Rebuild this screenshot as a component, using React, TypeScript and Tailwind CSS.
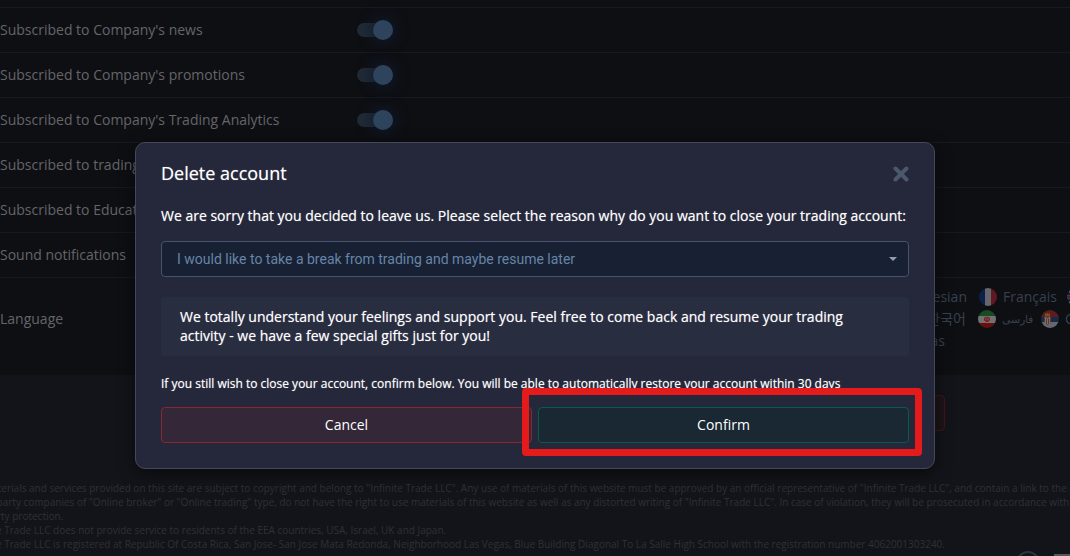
import React, { useId, useState } from 'react';
import clsx from 'clsx';

interface ToggleRowProps {
  label: string;
}

function ToggleRow({ label }: ToggleRowProps) {
  const [enabled, setEnabled] = useState(true);
  const id = useId();

  return (
    <div className="flex h-[45px] items-center border-b border-[#161822]">
      <label htmlFor={id} className="w-[357px] shrink-0 pb-0.5 text-[14px] text-[#646569]">
        {label}
      </label>
      <input
        id={id}
        type="checkbox"
        checked={enabled}
        onChange={(e) => setEnabled(e.target.checked)}
        className="relative h-3.5 w-9 appearance-none rounded-full bg-[#202b36] before:absolute before:-top-[3px] before:left-0 before:size-5 before:rounded-full before:bg-[#2e435c] before:shadow-[0_0_14px_2px_#101a2c] before:content-[''] checked:before:left-4"
      />
    </div>
  );
}

type FlagName = 'fr' | 'ir' | 'rs' | 'gb';

function Flag({ name }: { name: FlagName }) {
  return (
    <svg viewBox="0 0 18 18" className="size-[18px] shrink-0 rounded-full" aria-hidden="true">
      {name === 'fr' && (
        <>
          <path fill="#0d1f4b" d="M0 0h6v18H0z" />
          <path fill="#66676a" d="M6 0h6v18H6z" />
          <path fill="#631722" d="M12 0h6v18h-6z" />
        </>
      )}
      {name === 'ir' && (
        <>
          <path fill="#174b22" d="M0 0h18v6H0z" />
          <path fill="#707173" d="M0 6h18v7H0z" />
          <path fill="#68100f" d="M0 13h18v5H0z" />
          <path fill="none" stroke="#821512" strokeWidth="1.3" d="M7.8 7.2a2.3 2.3 0 1 0 2.4 0M9 6.8v4.6" />
        </>
      )}
      {name === 'rs' && (
        <>
          <path fill="#5d1c20" d="M0 0h18v7H0z" />
          <path fill="#152b48" d="M0 7h18v5H0z" />
          <path fill="#67686b" d="M0 12h18v6H0z" />
          <path fill="#65312b" d="M3 6h7v6l-3.500 3L3 12z" />
          <path fill="none" stroke="#777374" d="M4.500 14V7l2 2 2-2v7M6.500 9v5" />
          <path fill="#73551d" d="M4 3l1.500 1L6.500 2.500 7.500 4 9 3v3H4z" />
        </>
      )}
      {name === 'gb' && (
        <>
          <path fill="#0f1d4d" d="M0 0h18v18H0z" />
          <path stroke="#68696c" strokeWidth="3" d="M0 0l18 18M18 0L0 18M9 0v18M0 9h18" />
          <path stroke="#631722" strokeWidth="2" d="M9 0v18M0 9h18" />
        </>
      )}
    </svg>
  );
}

function LanguageList() {
  return (
    <div className="min-w-0 flex-1 whitespace-nowrap pl-[535px] text-[14px] leading-[22px] text-[#36414f]">
      <div className="flex items-center">
        <a href="#id" className="w-[75px] shrink-0 text-right">Indonesian</a>
        <a href="#fr" className="ml-3 flex shrink-0 items-center gap-1.5">
          <Flag name="fr" />
          Français
        </a>
        <a href="#en" className="ml-2.5 flex shrink-0 items-center gap-1.5">
          <Flag name="gb" />
        </a>
      </div>
      <div className="flex items-center">
        <a href="#ko" className="w-[74px] shrink-0 text-right">한국어</a>
        <a href="#fa" className="ml-3 flex shrink-0 items-center gap-1.5">
          <Flag name="ir" />
          <span dir="rtl" className="text-[11px]">فارسی</span>
        </a>
        <a href="#sr" className="ml-2 flex shrink-0 items-center gap-1.5">
          <Flag name="rs" />
          Српски
        </a>
      </div>
      <a href="#fil" className="block w-[53px] text-right">Filipinas</a>
    </div>
  );
}

const toggles = [
  "Subscribed to Company's news",
  "Subscribed to Company's promotions",
  "Subscribed to Company's Trading Analytics",
  'Subscribed to trading signals',
  'Subscribed to Educational materials',
  'Sound notifications',
];

const legalLines = [
  'All materials and services provided on this site are subject to copyright and belong to "Infinite Trade LLC". Any use of materials of this website must be approved by an official representative of "Infinite Trade LLC", and contain a link to the official resource.',
  'Third-party companies of "Online broker" or "Online trading" type, do not have the right to use materials of this website as well as any distorted writing of "Infinite Trade LLC". In case of violation, they will be prosecuted in accordance with the',
  'property protection.',
  'Infinite Trade LLC does not provide service to residents of the EEA countries, USA, Israel, UK and Japan.',
  'Infinite Trade LLC is registered at Republic Of Costa Rica, San Jose- San Jose Mata Redonda, Neighborhood Las Vegas, Blue Building Diagonal To La Salle High School with the registration number 4062001303240.',
];

function SettingsPage() {
  return (
    <div>
      <div className="border-b border-[#161822] pt-[7px]" />
      {toggles.map((label) => (
        <ToggleRow key={label} label={label} />
      ))}
      <div className="flex h-[97px] items-center pb-[15px]">
        <span className="w-[357px] shrink-0 pb-0.5 text-[14px] text-[#646569]">Language</span>
        <LanguageList />
      </div>

      <footer className="bg-[#131419] pt-5">
        <div className="flex justify-end pr-[125px]">
          <button type="button" aria-label="Delete account" className="h-9 w-[200px] rounded border border-[#421519] bg-[#1d1418]" />
        </div>
        <div className="-ml-[31px] mt-[50px] whitespace-nowrap text-[10px] leading-[14px] text-[#2f3037]">
          {legalLines.map((line) => (
            <p key={line}>{line}</p>
          ))}
        </div>
        <div className="flex items-start justify-end">
          <span className="size-6 rounded-full border-2 border-[#30323b]" />
          <span className="ml-3.5 mt-[3px] h-5 w-4 bg-[#55565a]" />
        </div>
      </footer>
    </div>
  );
}

interface ActionButtonProps {
  children: React.ReactNode;
  tone: 'danger' | 'success';
}

function ActionButton({ children, tone }: ActionButtonProps) {
  return (
    <button
      type="button"
      className={clsx(
        'h-9 w-full rounded border pb-0.5 text-[14px] font-medium text-white',
        tone === 'danger' ? 'border-[#872830] bg-[#332738]' : 'border-[#075c4b] bg-[#192832]'
      )}
    >
      {children}
    </button>
  );
}

function DeleteAccountDialog() {
  return (
    <div
      role="dialog"
      aria-labelledby="dialog-title"
      className="w-full max-w-[800px] rounded-[10px] border border-[#454858] bg-[#24283a] px-[25px] pb-[25px] text-white shadow-[0_4px_16px_#0008] [text-shadow:0_0_1px_#fff8]"
    >
      {/* Header */}
      <div className="flex h-[62px] items-center justify-between">
        <h2 id="dialog-title" className="pb-0.5 text-[18px] font-medium">Delete account</h2>
        <button type="button" aria-label="Close" className="text-[#4b576b]">
          <svg viewBox="0 0 16 16" className="size-4" fill="none" stroke="currentColor" strokeWidth="4" strokeLinecap="round">
            <path d="M2.500 2.500l11 11M13.500 2.500l-11 11" />
          </svg>
        </button>
      </div>

      {/* Reason */}
      <label htmlFor="reason" className="block whitespace-nowrap text-[14px] font-medium leading-[22px]">
        We are sorry that you decided to leave us. Please select the reason why do you want to close your trading account:
      </label>
      <div className="relative mt-3.5">
        <select
          id="reason"
          className="h-9 w-full appearance-none rounded border border-[#45546c] bg-[#182033] px-[15px] font-['Roboto',sans-serif] text-[14px] text-[#6685a7] [text-shadow:none]"
        >
          <option>I would like to take a break from trading and maybe resume later</option>
        </select>
        <svg viewBox="0 0 8 4" className="pointer-events-none absolute right-3 top-4 h-1 w-2 fill-[#8fa0b5]" aria-hidden="true">
          <path d="M0 0h8L4 4z" />
        </svg>
      </div>
      <p className="mt-5 rounded bg-[#282d40] px-[19px] pb-[11px] pt-2.5 text-[14px] font-medium leading-[19px]">
        We totally understand your feelings and support you. Feel free to come back and resume your trading activity - we have a few special gifts just for you!
      </p>

      {/* Actions */}
      <p className="mt-[18px] text-[12px] font-medium leading-5">
        If you still wish to close your account, confirm below. You will be able to automatically restore your account within 30 days
      </p>
      <div className="mt-[13px] grid grid-cols-2 gap-1.5">
        <ActionButton tone="danger">Cancel</ActionButton>
        <div className="relative">
          <ActionButton tone="success">Confirm</ActionButton>
          <div className="pointer-events-none absolute -bottom-[13px] -left-4 -right-[13px] -top-[19px] rounded border-[7px] border-[#e51b1b]" />
        </div>
      </div>
    </div>
  );
}

export default function App() {
  return (
    <main className="relative h-screen overflow-hidden bg-[#0e0f13] font-['Open_Sans','Noto_Sans','Noto_Sans_CJK_KR',sans-serif]">
      <SettingsPage />
      <div className="absolute inset-0 flex items-start justify-center pt-[142px]">
        <DeleteAccountDialog />
      </div>
    </main>
  );
}
